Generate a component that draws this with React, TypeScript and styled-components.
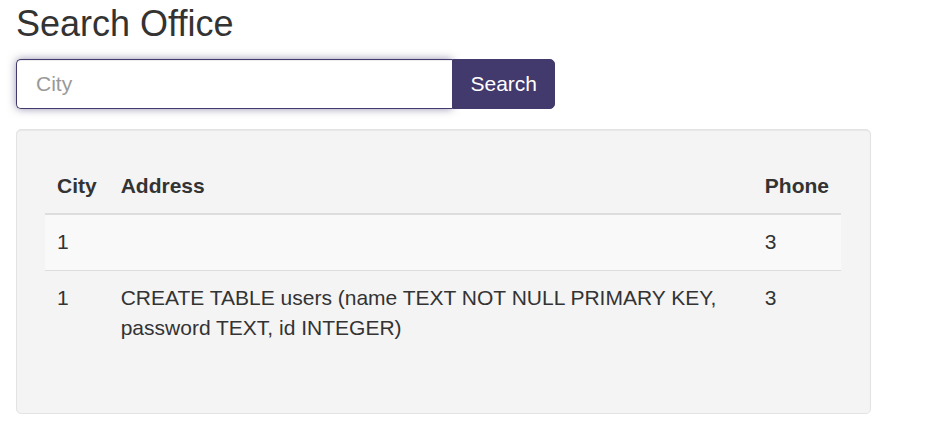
import React from "react"
import styled, { createGlobalStyle } from "styled-components"

const GlobalStyle = createGlobalStyle`
  body {
    margin: 0;
    background: #fff;
    font-family: "Liberation Sans", Arial, sans-serif;
    color: #333;
    font-size: 21px;
  }
  * { box-sizing: border-box; }
`

const Page = styled.div`
  padding: 4px 16px 0;
`

const Title = styled.h1`
  font-size: 36px;
  font-weight: 400;
  line-height: 1.1;
  margin: 0 0 15px;
  color: #333;
`

const SearchGroup = styled.form`
  display: flex;
  width: 539px;
  margin-bottom: 20px;
`

const CityInput = styled.input`
  flex: 1;
  height: 50px;
  padding: 10px 19px;
  font-size: 21px;
  font-family: inherit;
  color: #555;
  border: 1px solid #423a6c;
  border-right: 0;
  border-radius: 5px 0 0 5px;
  outline: none;
  box-shadow: inset 0 1px 1px rgba(0, 0, 0, 0.075), 0 0 8px rgba(66, 58, 108, 0.55);
  &::placeholder { color: #999; }
`

const SearchButton = styled.button`
  height: 50px;
  padding: 0 17px;
  font-size: 21px;
  font-family: inherit;
  color: #fff;
  background: #423a6c;
  border: 1px solid #423a6c;
  border-radius: 0 5px 5px 0;
  cursor: pointer;
`

const Well = styled.div`
  width: 855px;
  min-height: 285px;
  padding: 28px 29px 28px 28px;
  background: #f4f4f4;
  border: 1px solid #e3e3e3;
  border-radius: 5px;
  box-shadow: inset 0 1px 1px rgba(0, 0, 0, 0.05);
`

const Table = styled.table`
  width: 100%;
  border-collapse: collapse;
  border-spacing: 0;
`

const HeadCell = styled.th`
  text-align: left;
  font-weight: 700;
  padding: 13px 12px 12px;
  line-height: 30px;
  border-bottom: 2px solid #ddd;
`

const Row = styled.tr<{ $striped?: boolean }>`
  background: ${(p) => (p.$striped ? "#f9f9f9" : "transparent")};
`

const Cell = styled.td`
  padding: 12px 12px 13px;
  line-height: 30px;
  vertical-align: top;
  border-top: 1px solid #ddd;
`

const offices = [
  { city: "1", address: "", phone: "3" },
  { city: "1", address: "CREATE TABLE users (name TEXT NOT NULL PRIMARY KEY, password TEXT, id INTEGER)", phone: "3" },
]

export default function App() {
  return (
    <Page>
      <GlobalStyle />
      <Title>Search Office</Title>
      <SearchGroup onSubmit={(e) => e.preventDefault()}>
        <CityInput placeholder="City" autoFocus />
        <SearchButton type="submit">Search</SearchButton>
      </SearchGroup>
      <Well>
        <Table>
          <thead>
            <tr>
              <HeadCell>City</HeadCell>
              <HeadCell>Address</HeadCell>
              <HeadCell>Phone</HeadCell>
            </tr>
          </thead>
          <tbody>
            {offices.map((o, i) => (
              <Row key={i} $striped={i % 2 === 0}>
                <Cell>{o.city}</Cell>
                <Cell>{o.address}</Cell>
                <Cell>{o.phone}</Cell>
              </Row>
            ))}
          </tbody>
        </Table>
      </Well>
    </Page>
  )
}
